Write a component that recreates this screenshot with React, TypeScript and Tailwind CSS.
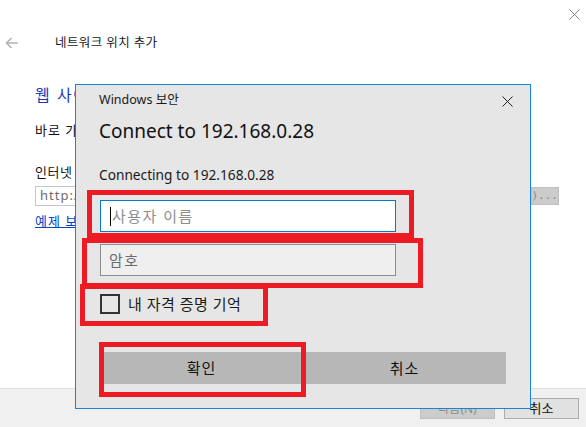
import React from 'react';

const kr = "font-['Noto_Sans','Noto_Sans_CJK_KR',sans-serif]";

// 빨간 강조 박스 (스크린샷 위 주석)
const RedBox = ({ className }: { className: string }) => (
  <div className={`absolute border-[5px] border-[#ed1c24] pointer-events-none ${className}`} />
);

const SecurityDialog = () => {
  return (
    <div className="absolute left-[75px] top-[84px] w-[456px] h-[325px] border border-[#1883d7] bg-[#e6e6e6] flex flex-col pl-[24px]">
      <div className="flex items-center justify-between pt-[7px] pr-[17px]">
        <span className="text-[12.5px] leading-[16px] text-[#1a1a1a] -ml-px">Windows 보안</span>
        <svg width="11" height="11" viewBox="0 0 11 11" className="mt-[2px]">
          <path d="M0.5 0.5L10.5 10.5M10.5 0.5L0.5 10.5" stroke="#222" strokeWidth="1" />
        </svg>
      </div>
      <div className="mt-[10px] text-[19px] leading-[26px] text-[#111] -ml-px">Connect to 192.168.0.28</div>
      <div className="mt-[22px] text-[13.7px] leading-[18px] text-[#1a1a1a] -ml-px">Connecting to 192.168.0.28</div>

      <div className="mt-[16px] w-[296px] h-[32px] bg-white border border-[#0078d7] flex items-center pl-[9px]">
        <span className="w-px h-[19px] bg-black mr-px" />
        <span className="text-[15px] tracking-[1.5px] text-[#8e8e8e]">사용자 이름</span>
      </div>
      <div className="mt-[12px] w-[296px] h-[32px] bg-[#efefef] border border-[#8c8c8c] flex items-center pl-[8px]">
        <span className="text-[15px] tracking-[1.5px] text-[#6b6b6b]">암호</span>
      </div>

      <div className="mt-[18px] h-[20px] flex items-center gap-[8px]">
        <div className="w-[20px] h-[20px] border-2 border-[#333]" />
        <span className="text-[15px] text-[#1a1a1a] tracking-[0.5px]">내 자격 증명 기억</span>
      </div>

      <div className="mt-[38px] flex">
        <button className="w-[203px] h-[32px] bg-[#b7b7b7] text-[15px] tracking-[1px] text-[#111]">확인</button>
        <button className="w-[203px] h-[32px] bg-[#b7b7b7] text-[15px] tracking-[1px] text-[#111]">취소</button>
      </div>
    </div>
  );
};

export default function App() {
  return (
    <div className={`relative w-[586px] h-[427px] overflow-hidden bg-white flex flex-col ${kr}`}>
      {/* 창 닫기 */}
      <svg width="11" height="11" viewBox="0 0 11 11" className="absolute right-[6px] top-[9px]">
        <path d="M0.5 0.5L10.5 10.5M10.5 0.5L0.5 10.5" stroke="#8a8a8a" strokeWidth="1" />
      </svg>

      {/* 헤더 */}
      <div className="flex items-center pt-[35px] h-[51px]">
        <svg width="14" height="12" viewBox="0 0 14 12" className="ml-[5px]">
          <path d="M13 6H1.5M6.5 1L1.5 6L6.5 11" stroke="#b4b4b4" strokeWidth="1.6" fill="none" />
        </svg>
        <span className="ml-[36px] text-[12.5px] leading-[16px] text-[#1a1a1a] tracking-[0.4px]">네트워크 위치 추가</span>
      </div>

      {/* 본문 */}
      <div className="flex-1 flex flex-col pl-[35px] whitespace-nowrap">
        <div className="mt-[34px] text-[16px] leading-[20px] text-[#1c3cb0] tracking-[1.5px]">웹 사이트에 연결할 위치를 지정하십시오.</div>
        <div className="mt-[17px] text-[13px] leading-[16px] text-[#111] tracking-[1px]">바로 가기를 만들 웹 사이트, FTP 사이트 또는 네트워크 위치의 주소를 입력하십시오.</div>
        <div className="mt-[26px] text-[13px] leading-[16px] text-[#111] tracking-[0.5px]">인터넷 또는 네트워크 주소(A):</div>
        <div className="mt-[6px] flex items-center gap-[8px]">
          <div className="w-[488px] h-[20px] border border-[#c8c8c8] flex items-center pl-[4px] text-[13px] tracking-[1px] text-[#6d6d6d]">http://</div>
          <div className="w-[28px] h-[18px] overflow-hidden bg-[#cccccc] border border-[#bfbfbf] flex items-center justify-end text-[11px] text-[#8a8a8a] font-['DejaVu_Sans_Mono',monospace]">
            (R)...
          </div>
        </div>
        <div className="mt-[7px] text-[13px] leading-[16px] text-[#0645c7] underline tracking-[1px]">예제 보기</div>
      </div>

      {/* 하단 버튼 영역 */}
      <div className="h-[39px] bg-[#f0f0f0] border-t border-[#dfdfdf] flex items-start justify-end pt-[9px] pr-[7px] gap-[9px]">
        <div className="w-[75px] h-[21px] bg-[#cccccc] border border-[#bfbfbf] flex items-center justify-center text-[12px] text-[#8d8d8d]">다음(N)</div>
        <div className="w-[75px] h-[21px] bg-[#e1e1e1] border border-[#adadad] flex items-center justify-center text-[13px] text-[#111]">취소</div>
      </div>

      <SecurityDialog />

      <RedBox className="left-[87px] top-[190px] w-[327px] h-[48px]" />
      <RedBox className="left-[82px] top-[238px] w-[341px] h-[50px]" />
      <RedBox className="left-[80px] top-[284px] w-[188px] h-[42px]" />
      <RedBox className="left-[99px] top-[342px] w-[207px] h-[55px]" />
    </div>
  );
}
